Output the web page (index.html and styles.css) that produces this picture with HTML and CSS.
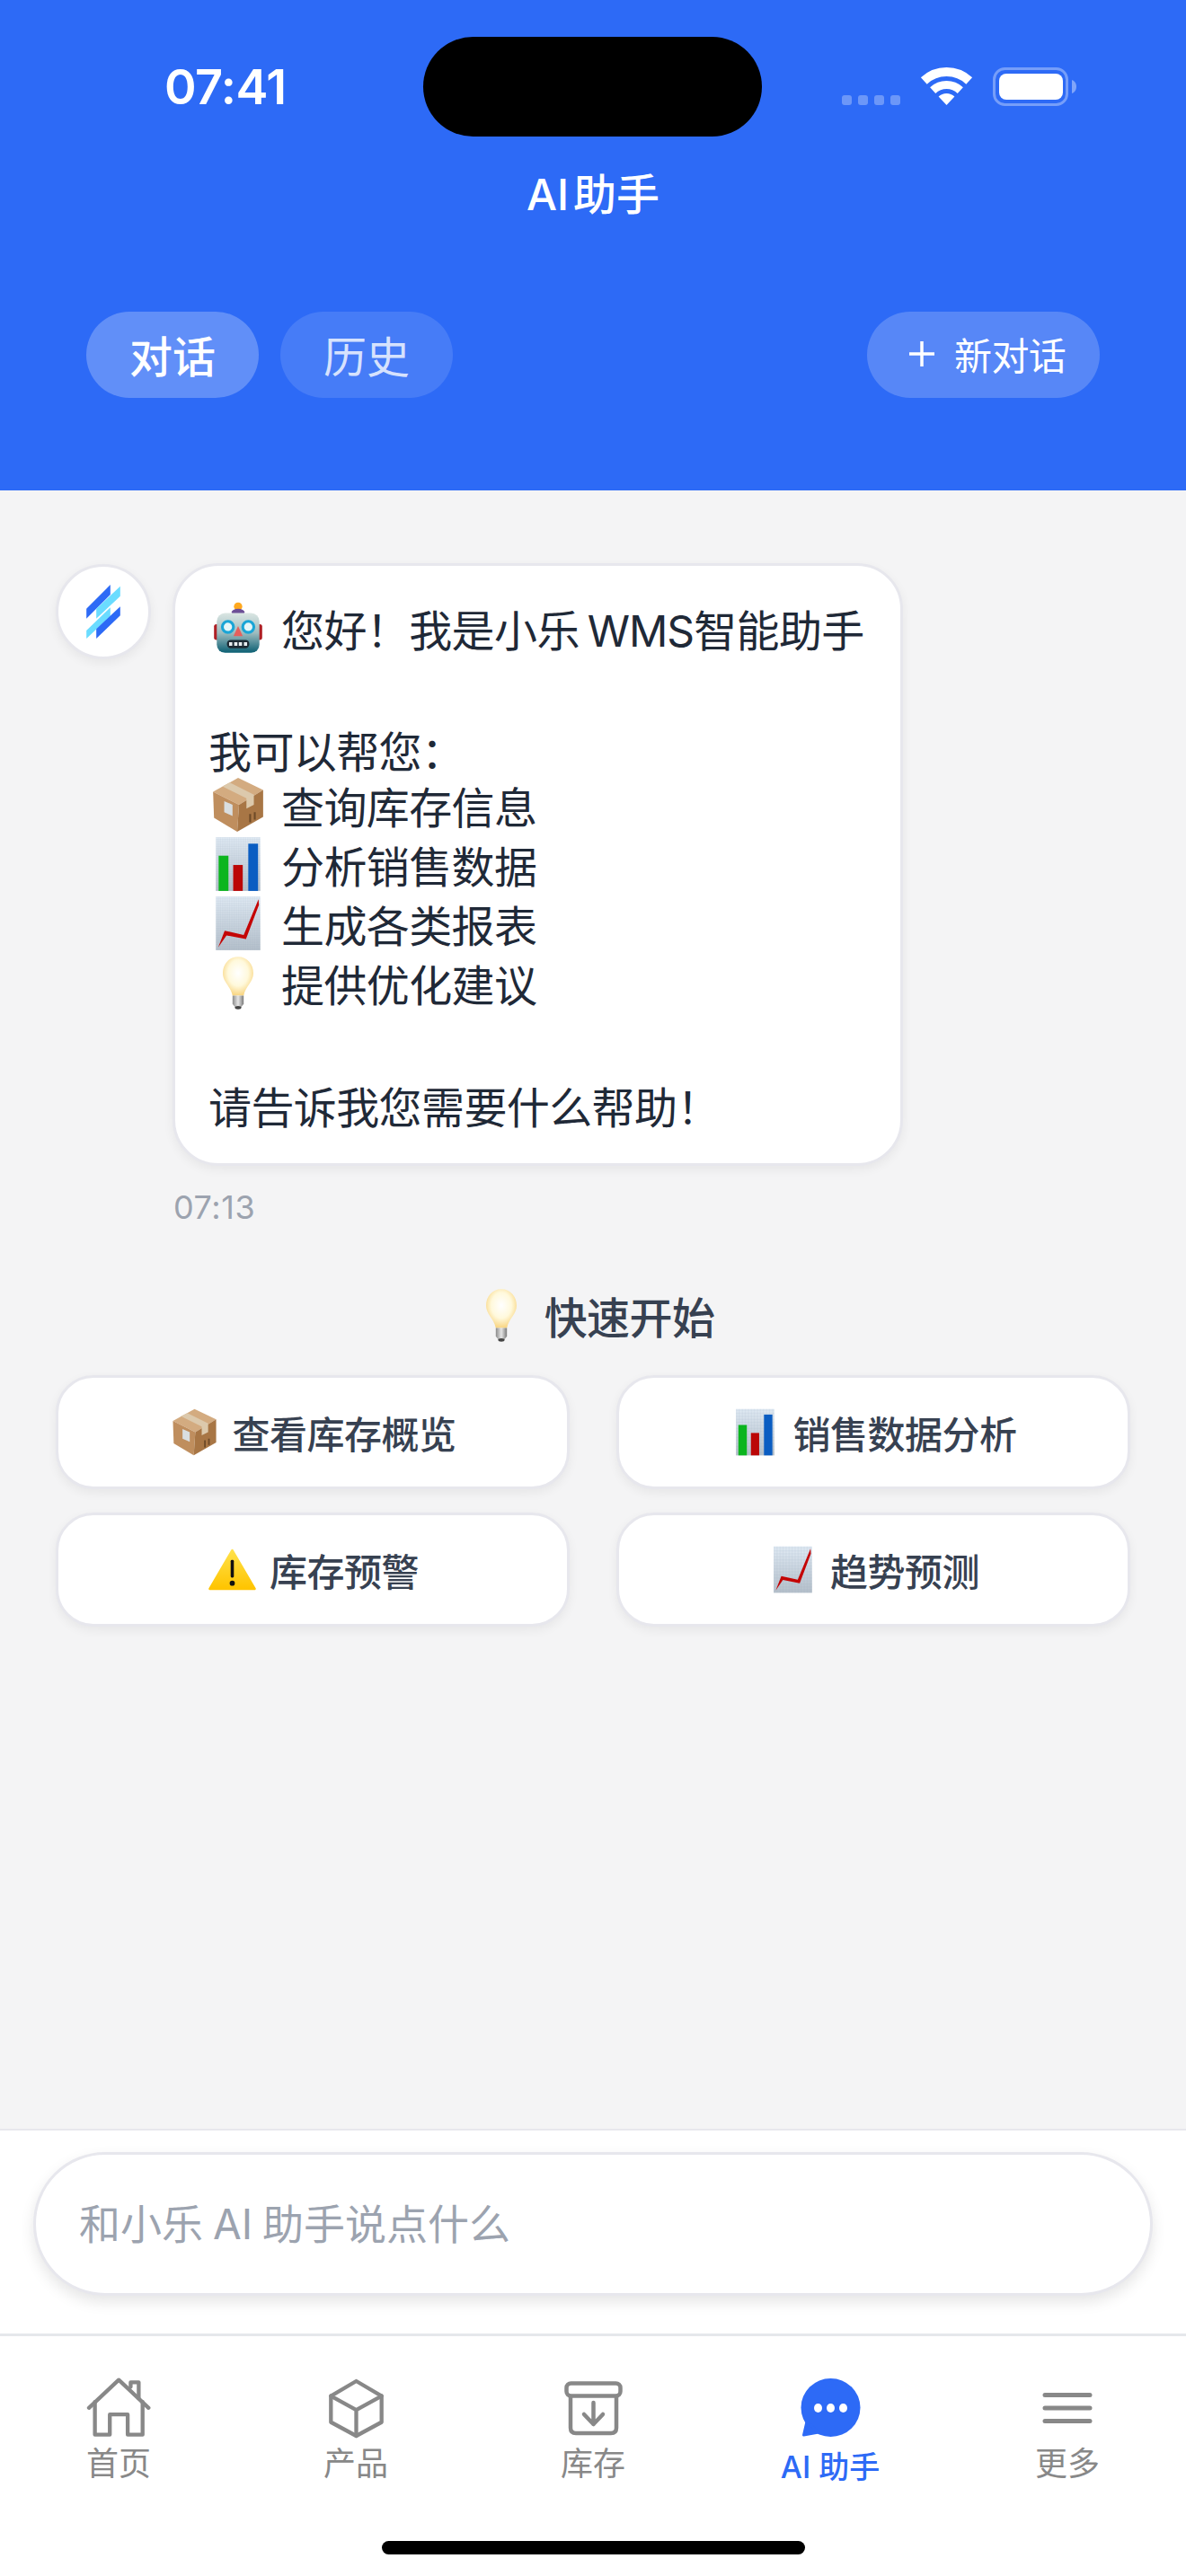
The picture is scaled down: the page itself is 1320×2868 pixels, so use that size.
FILE: index.html
```html
<!DOCTYPE html>
<html lang="zh-CN">
<head>
  <meta charset="UTF-8" />
  <meta name="viewport" content="width=device-width, initial-scale=1.0"/>
  <title>AI助手</title>
  <link rel="stylesheet" href="styles.css">
</head>
<body>
  <!-- emoji drawings, reused below -->
  <svg class="sprite" xmlns="http://www.w3.org/2000/svg">
    <defs>
      <linearGradient id="robotHead" x1="0" y1="0" x2="0" y2="1">
        <stop offset="0" stop-color="#dbe6e3"/><stop offset="0.5" stop-color="#9dbcbf"/><stop offset="1" stop-color="#0b5f73"/>
      </linearGradient>
      <linearGradient id="paper" x1="0" y1="0" x2="0" y2="1">
        <stop offset="0" stop-color="#e3edf6"/><stop offset="1" stop-color="#b6c1cb"/>
      </linearGradient>
      <pattern id="paperGrid" width="1.6" height="1.6" patternUnits="userSpaceOnUse">
        <path d="M0 0H1.6M0 0V1.6" stroke="#8aa0b5" stroke-width="0.4" opacity="0.5"/>
      </pattern>
      <radialGradient id="bulbGlow" cx="0.5" cy="0.42" r="0.6">
        <stop offset="0" stop-color="#ffffff"/><stop offset="0.55" stop-color="#fff9dc"/><stop offset="1" stop-color="#f8d27a"/>
      </radialGradient>
      <linearGradient id="bulbBase" x1="0" y1="0" x2="1" y2="0">
        <stop offset="0" stop-color="#8b8b8b"/><stop offset="0.5" stop-color="#e6e6e6"/><stop offset="1" stop-color="#7a7a7a"/>
      </linearGradient>
      <linearGradient id="warnFill" x1="0" y1="0" x2="0" y2="1">
        <stop offset="0" stop-color="#ffe14a"/><stop offset="1" stop-color="#ffc400"/>
      </linearGradient>
      <symbol id="e-robot" viewBox="0 0 64 64">
        <circle cx="32" cy="9" r="4.5" fill="#ffa91f"/>
        <ellipse cx="32" cy="15" rx="7" ry="3.5" fill="#6c4f96"/>
        <rect x="6" y="28" width="6" height="17" rx="2.5" fill="#ae1f24"/>
        <rect x="52" y="28" width="6" height="17" rx="2.5" fill="#ae1f24"/>
        <rect x="9" y="16" width="46" height="43" rx="9" fill="url(#robotHead)"/>
        <circle cx="21" cy="31" r="6" fill="#e6f6f8" stroke="#1aa5d6" stroke-width="3"/>
        <circle cx="43" cy="31" r="6" fill="#e6f6f8" stroke="#1aa5d6" stroke-width="3"/>
        <path d="M32 30 L27 41 H37 Z" fill="#e55f5c"/>
        <rect x="20" y="45" width="24" height="9" rx="4" fill="#1c2a33"/>
        <path d="M24 47.500V51.500M29.500 47.500V51.500M34.500 47.500V51.500M40 47.500V51.500" stroke="#e8eef0" stroke-width="3.500"/>
      </symbol>
      <symbol id="e-box" viewBox="0 0 64 64">
        <path d="M32 3 L59 16 L33 32 L5 18 Z" fill="#d3ab80"/>
        <path d="M5 18 L33 32 L31 61 L6 46 Z" fill="#bf8e5e"/>
        <path d="M59 16 L59 45 L31 61 L33 32 Z" fill="#a87645"/>
        <path d="M15 12 L23 8 L49 21 L49 32 L41 36 L41 25 Z" fill="#dcc9ac"/>
        <path d="M17 28 L26 32 L26 44 L17 40 Z" fill="#d9dee1"/>
        <path d="M45 42V51M50 40V48" stroke="#6d4a28" stroke-width="2"/>
      </symbol>
      <symbol id="e-bars" viewBox="0 0 64 64">
        <rect x="8" y="3" width="48" height="58" fill="url(#paper)"/>
        <rect x="8" y="3" width="48" height="58" fill="url(#paperGrid)"/>
        <rect x="11" y="23" width="10.600" height="38" fill="#0bb51e"/>
        <rect x="26.700" y="33" width="10.300" height="28" fill="#bb0606"/>
        <rect x="43" y="10" width="10.500" height="51" fill="#0a5dc2"/>
      </symbol>
      <symbol id="e-trend" viewBox="0 0 64 64">
        <rect x="8" y="3" width="48" height="58" fill="url(#paper)"/>
        <rect x="8" y="3" width="48" height="58" fill="url(#paperGrid)"/>
        <path d="M10.500 58 L17.500 40 L38 44.500 L54 6 L54.500 12 L40.500 49 L19.500 45 Z" fill="#c40505"/>
      </symbol>
      <symbol id="e-bulb" viewBox="0 0 64 64">
        <path d="M32 4 C22 4 15.500 12 15.500 22 C15.500 31 24 36 26 46 H38 C40 36 48.500 31 48.500 22 C48.500 12 42 4 32 4 Z" fill="url(#bulbGlow)"/>
        <path d="M26 46 H38 V55 L35 59 H29 L26 55 Z" fill="url(#bulbBase)"/>
        <ellipse cx="32" cy="59" rx="3.500" ry="1.800" fill="#444"/>
      </symbol>
      <symbol id="e-warn" viewBox="0 0 64 64">
        <path d="M32 8 L60 56 H4 Z" fill="url(#warnFill)" stroke="url(#warnFill)" stroke-width="3" stroke-linejoin="round"/>
        <rect x="30" y="20" width="4" height="22" rx="1.500" fill="#111"/>
        <circle cx="32" cy="49" r="3.200" fill="#111"/>
      </symbol>
    </defs>
  </svg>

  <div class="app">
    <header class="top">
      <div class="status-bar">
        <div class="status-left">07:41</div>
        <div class="island"></div>
        <svg class="status-icons" width="261" height="43" viewBox="0 0 261 43">
          <g fill="#fff" opacity="0.3">
            <rect x="0" y="31" width="11" height="11" rx="3"/>
            <rect x="18" y="31" width="11" height="11" rx="3"/>
            <rect x="36" y="31" width="11" height="11" rx="3"/>
            <rect x="54" y="31" width="11" height="11" rx="3"/>
          </g>
          <g transform="translate(88 0)">
            <path d="M3.300 15 A37 37 0 0 1 53.700 15" fill="none" stroke="#fff" stroke-width="10"/>
            <path d="M13.200 25.600 A22.500 22.500 0 0 1 43.800 25.600" fill="none" stroke="#fff" stroke-width="9"/>
            <path d="M28.500 42 L19.600 32.500 A13 13 0 0 1 37.400 32.500 Z" fill="#fff"/>
          </g>
          <rect x="169.500" y="1.500" width="81" height="40" rx="12" fill="none" stroke="#fff" stroke-opacity="0.35" stroke-width="3"/>
          <rect x="175" y="7" width="71" height="29" rx="8" fill="#fff"/>
          <path d="M256 14 C259 15 261 18 261 21.500 C261 25 259 28 256 29 Z" fill="#fff" opacity="0.4"/>
        </svg>
      </div>
      <div class="page-title">AI 助手</div>
      <div class="tabs">
        <button class="pill pill-on">对话</button>
        <button class="pill">历史</button>
        <button class="pill-new">
          <svg width="28" height="28" viewBox="0 0 28 28"><path d="M14 0V28M0 14H28" stroke="#fff" stroke-width="3.500"/></svg>
          新对话
        </button>
      </div>
    </header>

    <main class="chat">
      <div class="msg">
        <div class="avatar">
          <svg width="38" height="60" viewBox="0 0 113 180">
            <path d="M0 80 L80 0 V33 L0 113 Z" fill="#2d6af6"/>
            <path d="M33 80 L113 5 V38 L33 113 Z" fill="#6adcff"/>
            <path d="M0 153 L80 76 V105 L0 180 Z" fill="#6adcff"/>
            <path d="M33 148 L113 73 V103 L33 180 Z" fill="#2d6af6"/>
          </svg>
        </div>
        <div class="bubble">
          <div class="line line-emoji"><svg class="emoji"><use href="#e-robot"/></svg><span>您好！我是小乐 <span class="latin">WMS</span>智能助手</span></div>
          <div class="line-blank"></div>
          <div class="line line-short">我可以帮您：</div>
          <div class="line line-emoji"><svg class="emoji"><use href="#e-box"/></svg>查询库存信息</div>
          <div class="line line-emoji"><svg class="emoji"><use href="#e-bars"/></svg>分析销售数据</div>
          <div class="line line-emoji"><svg class="emoji"><use href="#e-trend"/></svg>生成各类报表</div>
          <div class="line line-emoji"><svg class="emoji"><use href="#e-bulb"/></svg>提供优化建议</div>
          <div class="line-blank"></div>
          <div class="line">请告诉我您需要什么帮助！</div>
        </div>
      </div>
      <div class="msg-time">07:13</div>

      <div class="quick-title"><svg class="emoji"><use href="#e-bulb"/></svg>快速开始</div>
      <div class="quick-grid">
        <button class="quick-btn"><svg class="emoji-sm"><use href="#e-box"/></svg>查看库存概览</button>
        <button class="quick-btn"><svg class="emoji-sm"><use href="#e-bars"/></svg>销售数据分析</button>
        <button class="quick-btn"><svg class="emoji-sm"><use href="#e-warn"/></svg>库存预警</button>
        <button class="quick-btn"><svg class="emoji-sm"><use href="#e-trend"/></svg>趋势预测</button>
      </div>
    </main>

    <div class="input-bar">
      <input class="chat-input" type="text" placeholder="和小乐 AI 助手说点什么">
    </div>

    <nav class="tabbar">
      <a class="tab">
        <span class="tab-icon">
          <svg width="72" height="68" viewBox="110 80 215 205" fill="none" stroke="#888" stroke-width="13" stroke-linecap="round" stroke-linejoin="round">
            <path d="M118 182 L218 88 L318 182"/>
            <path d="M258 112 V96 H285 V150"/>
            <path d="M138 162 V272 H188 V204 H248 V272 H298 V162"/>
          </svg>
        </span>
        <span>首页</span>
      </a>
      <a class="tab">
        <span class="tab-icon">
          <svg width="63" height="67" viewBox="915 80 190 200" fill="none" stroke="#888" stroke-width="13" stroke-linecap="round" stroke-linejoin="round">
            <path d="M1010 88 L1095 138 V226 L1010 272 L925 226 V138 Z"/>
            <path d="M925 138 L1010 185 L1095 138 M1010 185 V272"/>
          </svg>
        </span>
        <span>产品</span>
      </a>
      <a class="tab">
        <span class="tab-icon">
          <svg width="65" height="61" viewBox="0 0 65 61" fill="none" stroke="#888" stroke-width="4.500" stroke-linecap="round" stroke-linejoin="round">
            <rect x="2.500" y="2.500" width="60" height="14" rx="5"/>
            <path d="M7 17 V52 Q7 58 13 58 H52 Q58 58 58 52 V17"/>
            <path d="M32.500 24 V48 M22 37 L32.500 48 L43 37"/>
          </svg>
        </span>
        <span>库存</span>
      </a>
      <a class="tab tab-on">
        <span class="tab-icon">
          <svg width="67" height="66" viewBox="0 0 67 66">
            <ellipse cx="33.500" cy="32.500" rx="33" ry="32.500" fill="#2d6af6"/>
            <path d="M7 48 L3.500 63 L20 60 Z" fill="#2d6af6" stroke="#2d6af6" stroke-width="3" stroke-linejoin="round"/>
            <ellipse cx="19.500" cy="33" rx="4.500" ry="5" fill="#fff"/>
            <ellipse cx="33.500" cy="33" rx="4.500" ry="5" fill="#fff"/>
            <ellipse cx="47.500" cy="33" rx="4.500" ry="5" fill="#fff"/>
          </svg>
        </span>
        <span>AI 助手</span>
      </a>
      <a class="tab">
        <span class="tab-icon">
          <svg width="56" height="34" viewBox="0 0 56 34" stroke="#888" stroke-width="5" stroke-linecap="round">
            <path d="M3 2.500 H53 M3 17 H53 M3 31.500 H53"/>
          </svg>
        </span>
        <span>更多</span>
      </a>
      <div class="home-bar"></div>
    </nav>
  </div>
</body>
</html>
```

FILE: styles.css
```css
body {
    margin: 0;
    padding: 0;
    background-color: #f4f4f5;
    font-family: Inter, "Noto Sans CJK SC", sans-serif;
    color: #1f2937;
}

button {
    font-family: inherit;
    border: none;
    padding: 0;
}

.sprite {
    display: block;
    width: 0;
    height: 0;
    overflow: hidden;
}

.app {
    width: 1320px;
    height: 2868px;
    display: flex;
    flex-direction: column;
    overflow: hidden;
}

/* blue top area */
.top {
    background-color: #2d6af6;
    color: #fff;
    height: 546px;
    flex-shrink: 0;
    box-sizing: border-box;
}

.status-bar {
    display: flex;
    align-items: center;
    height: 111px;
    padding-top: 41px;
}

.status-left {
    width: 288px;
    margin-left: 183px;
    font-size: 54px;
    font-weight: 600;
    letter-spacing: -0.5px;
    line-height: 1;
}

.island {
    width: 377px;
    height: 111px;
    background-color: #000;
    border-radius: 56px;
}

.status-icons {
    margin-left: 89px;
}

.page-title {
    height: 90px;
    margin-top: 20px;
    line-height: 90px;
    text-align: center;
    font-size: 48px;
    font-weight: 500;
    word-spacing: -8px;
}

.tabs {
    display: flex;
    gap: 24px;
    margin-top: 85px;
    padding: 0 96px;
}

.pill {
    width: 192px;
    height: 96px;
    padding-bottom: 3px;
    border-radius: 48px;
    font-size: 48px;
    color: rgba(255, 255, 255, 0.8);
    background-color: rgba(255, 255, 255, 0.12);
}

.pill-on {
    color: #fff;
    font-weight: 500;
    background-color: rgba(255, 255, 255, 0.25);
}

.pill-new {
    display: flex;
    align-items: center;
    gap: 22px;
    width: 259px;
    height: 96px;
    margin-left: auto;
    padding: 0 0 3px 47px;
    box-sizing: border-box;
    border-radius: 48px;
    font-size: 42px;
    letter-spacing: -0.6px;
    color: #fff;
    background-color: rgba(255, 255, 255, 0.2);
}

/* chat area */
.chat {
    flex: 1;
    padding: 82px 62px 0;
}

.msg {
    display: flex;
    align-items: flex-start;
    gap: 24px;
}

.avatar {
    display: flex;
    align-items: center;
    justify-content: center;
    flex-shrink: 0;
    width: 106px;
    height: 106px;
    box-sizing: border-box;
    background-color: #fff;
    border: 3px solid #e7e7ed;
    border-radius: 50%;
    box-shadow: 0 4px 12px rgba(0, 0, 0, 0.06);
}

.bubble {
    width: 813px;
    margin-top: -1px;
    box-sizing: border-box;
    padding: 36px 30px 34px 37px;
    background-color: #fff;
    border: 3px solid #e7e7ed;
    border-radius: 51px;
    box-shadow: 0 4px 12px rgba(0, 0, 0, 0.06);
    font-size: 48px;
    letter-spacing: -0.6px;
}

.line {
    display: flex;
    align-items: center;
    height: 62px;
    white-space: nowrap;
}

.line-emoji {
    height: 66px;
}

.line-short {
    height: 59px;
}

.line-blank {
    height: 72px;
}

.latin {
    margin-left: -4px;
    letter-spacing: -1px;
}

.emoji {
    flex-shrink: 0;
    width: 66px;
    height: 66px;
    margin-right: 15px;
}

.msg-time {
    margin-top: 24px;
    margin-left: 131px;
    font-size: 36px;
    line-height: 44px;
    letter-spacing: 0.6px;
    color: #9ca3af;
}

.quick-title {
    display: flex;
    align-items: center;
    justify-content: center;
    height: 66px;
    margin-top: 65px;
    font-size: 48px;
    font-weight: 500;
    letter-spacing: -0.6px;
    color: #374151;
}

.quick-grid {
    display: grid;
    grid-template-columns: 572px 572px;
    gap: 26px 52px;
    margin-top: 34px;
}

.quick-btn {
    display: flex;
    align-items: center;
    justify-content: center;
    height: 127px;
    box-sizing: border-box;
    background-color: #fff;
    border: 3px solid #e7e7ed;
    border-radius: 42px;
    box-shadow: 0 4px 12px rgba(0, 0, 0, 0.06);
    font-size: 42px;
    font-weight: 500;
    letter-spacing: -0.5px;
    color: #374151;
}

.emoji-sm {
    flex-shrink: 0;
    width: 57px;
    height: 57px;
    margin-right: 13px;
}

/* input */
.input-bar {
    flex-shrink: 0;
    height: 228px;
    box-sizing: border-box;
    padding: 24px 37px 0;
    background-color: #fff;
    border-top: 2px solid #e7e7ed;
}

.chat-input {
    display: block;
    width: 100%;
    height: 160px;
    box-sizing: border-box;
    padding: 0 48px;
    background-color: #fff;
    border: 3px solid #e7e7ed;
    border-radius: 80px;
    box-shadow: 0 7px 16px rgba(0, 0, 0, 0.1);
    font-family: inherit;
    font-size: 46px;
    word-spacing: -2px;
    outline: none;
}

.chat-input::placeholder {
    color: #9ca3af;
}

/* bottom tabs */
.tabbar {
    position: relative;
    flex-shrink: 0;
    display: grid;
    grid-template-columns: repeat(5, 264px);
    height: 270px;
    box-sizing: border-box;
    padding-top: 46px;
    background-color: #fff;
    border-top: 3px solid #e5e7eb;
}

.tab {
    display: flex;
    flex-direction: column;
    align-items: center;
    font-size: 36px;
    line-height: 40px;
    color: #888;
}

.tab-icon {
    display: flex;
    align-items: center;
    justify-content: center;
    height: 68px;
    margin-bottom: 8px;
}

.tab-on {
    color: #2d6af6;
    font-size: 34px;
    font-weight: 500;
}

.tab-on .tab-icon {
    margin-bottom: 12px;
}

.home-bar {
    position: absolute;
    left: 425px;
    bottom: 24px;
    width: 471px;
    height: 15px;
    background-color: #000;
    border-radius: 8px;
}
```
